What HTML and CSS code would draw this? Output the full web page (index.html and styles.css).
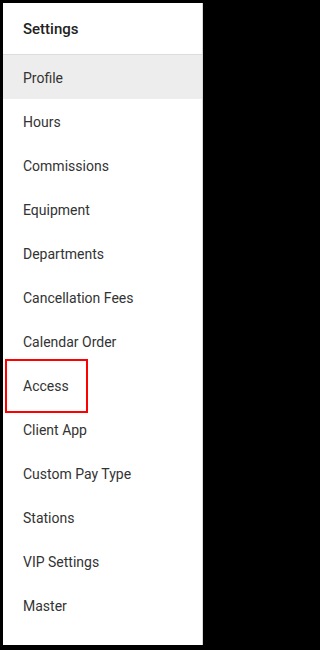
FILE: index.html
```html
<!DOCTYPE html>
<html>
<head>
<meta charset="utf-8">
<link rel="stylesheet" href="styles.css">
</head>
<body>
<div class="frame">
  <nav class="panel">
    <div class="header">Settings</div>
    <ul class="menu">
      <li class="item active">Profile</li>
      <li class="item">Hours</li>
      <li class="item">Commissions</li>
      <li class="item">Equipment</li>
      <li class="item">Departments</li>
      <li class="item">Cancellation Fees</li>
      <li class="item">Calendar Order</li>
      <li class="item highlight"><span class="mark"></span>Access</li>
      <li class="item">Client App</li>
      <li class="item">Custom Pay Type</li>
      <li class="item">Stations</li>
      <li class="item">VIP Settings</li>
      <li class="item">Master</li>
    </ul>
  </nav>
</div>
</body>
</html>
```
FILE: styles.css
```css
html, body {
  margin: 0;
  padding: 0;
  background: #000;
}
.frame {
  box-sizing: border-box;
  width: 207px;
  height: 650px;
  border-style: solid;
  border-color: #000;
  border-width: 3px 4px 5px 3px;
  background: #fff;
}
.panel {
  height: 100%;
  box-sizing: border-box;
  border-right: 1px solid #d6d6d6;
  background: #fff;
  font-family: Roboto, "Liberation Sans", sans-serif;
  color: #333;
}
.header {
  height: 51px;
  border-bottom: 1px solid #dcdcdc;
  padding-left: 20px;
  display: flex;
  align-items: center;
  font-size: 15px;
  font-weight: 500;
  color: #222;
  box-sizing: content-box;
}
.menu {
  list-style: none;
  margin: 0;
  padding: 0;
}
.item {
  box-sizing: border-box;
  height: 44px;
  display: flex;
  align-items: center;
  padding-left: 20px;
  padding-top: 2px;
  font-size: 14px;
  position: relative;
}
.active {
  background: #ededed;
}
.mark {
  position: absolute;
  left: 2px;
  top: -4px;
  width: 83px;
  height: 54px;
  box-sizing: border-box;
  border: 2px solid #f00;
}
```
